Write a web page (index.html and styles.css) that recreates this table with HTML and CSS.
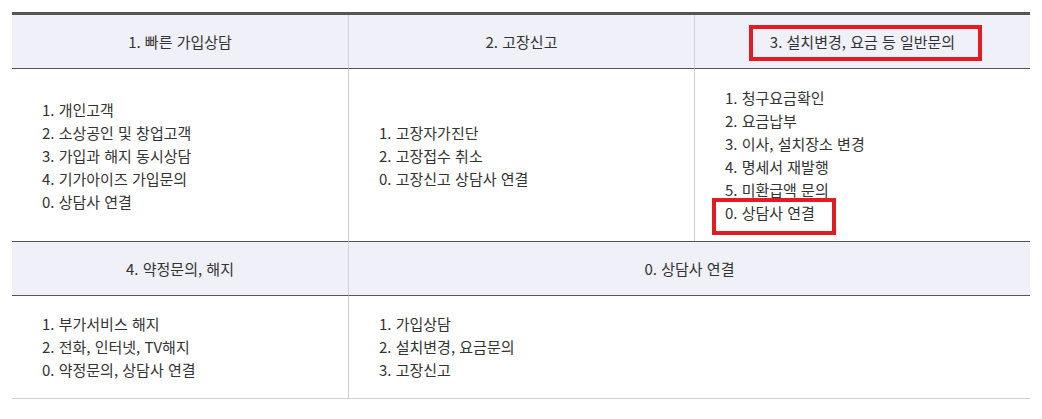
FILE: index.html
```html
<!DOCTYPE html>
<html lang="ko">
<head>
<meta charset="utf-8">
<link rel="stylesheet" href="styles.css">
</head>
<body>
<div class="wrap">
  <div class="board">
    <div class="th first">1. 빠른 가입상담</div>
    <div class="th first col">2. 고장신고</div>
    <div class="th first col"><span class="mark mark-head">3. 설치변경, 요금 등 일반문의</span></div>

    <div class="td">
      <ul class="list">
        <li>1. 개인고객</li>
        <li>2. 소상공인 및 창업고객</li>
        <li>3. 가입과 해지 동시상담</li>
        <li>4. 기가아이즈 가입문의</li>
        <li>0. 상담사 연결</li>
      </ul>
    </div>
    <div class="td col">
      <ul class="list">
        <li>1. 고장자가진단</li>
        <li>2. 고장접수 취소</li>
        <li>0. 고장신고 상담사 연결</li>
      </ul>
    </div>
    <div class="td col">
      <ul class="list">
        <li>1. 청구요금확인</li>
        <li>2. 요금납부</li>
        <li>3. 이사, 설치장소 변경</li>
        <li>4. 명세서 재발행</li>
        <li>5. 미환급액 문의</li>
        <li><span class="mark mark-item">0. 상담사 연결</span></li>
      </ul>
    </div>

    <div class="th">4. 약정문의, 해지</div>
    <div class="th col span2">0. 상담사 연결</div>

    <div class="td last">
      <ul class="list">
        <li>1. 부가서비스 해지</li>
        <li>2. 전화, 인터넷, TV해지</li>
        <li>0. 약정문의, 상담사 연결</li>
      </ul>
    </div>
    <div class="td last col span2">
      <ul class="list">
        <li>1. 가입상담</li>
        <li>2. 설치변경, 요금문의</li>
        <li>3. 고장신고</li>
      </ul>
    </div>
  </div>
</div>
</body>
</html>
```

FILE: styles.css
```css
* { box-sizing: border-box; }
html, body { margin: 0; padding: 0; background: #fff; }
body {
  font-family: "Noto Sans CJK KR", "Noto Sans", sans-serif;
  font-size: 15px;
  color: #333;
}
.wrap { padding: 12px 12px 0 12px; }
.board {
  width: 1018px;
  display: grid;
  grid-template-columns: 336px 346px 336px;
  border-top: 3px solid #555;
}
.col { border-left: 1px solid #cfcfcf; }
.span2 { grid-column: span 2; }
.th {
  background: #eff0f8;
  border-top: 1px solid #555;
  border-bottom: 1px solid #555;
  padding: 15px 10px;
  line-height: 23px;
  text-align: center;
  color: #333;
}
.th.first { border-top: 0; }
.td {
  display: flex;
  align-items: center;
  padding: 17px 30px;
  line-height: 23px;
}
.td.last { padding: 16px 30px 17px; border-bottom: 1px solid #d2d2d2; }
.list { list-style: none; margin: 0; padding: 0; }
.mark { position: relative; display: inline-block; }
.mark::after {
  content: "";
  position: absolute;
  border: 4px solid #e31b23;
}
.mark-head::after { top: -5px; bottom: -8px; left: -21px; right: -27px; }
.mark-item::after { top: -3px; bottom: -11px; left: -13px; right: -21px; }
```
